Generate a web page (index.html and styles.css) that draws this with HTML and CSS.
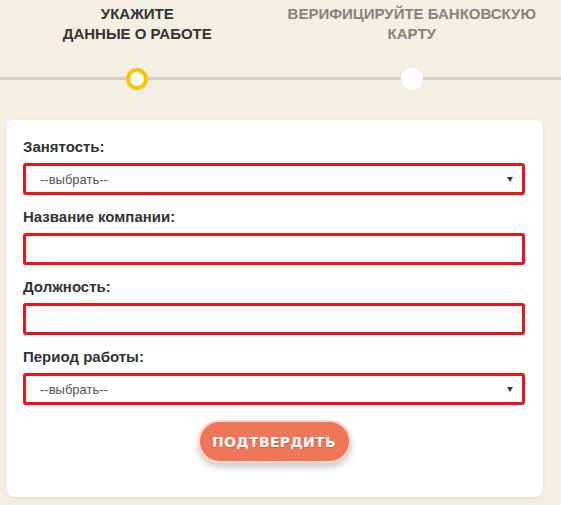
FILE: index.html
```html
<!DOCTYPE html>
<html lang="ru">
<head>
<meta charset="utf-8">
<title>Данные о работе</title>
<link rel="stylesheet" href="styles.css">
</head>
<body>
<div class="steps">
  <div class="step-labels">
    <div class="step-label active">УКАЖИТЕ<br>ДАННЫЕ О РАБОТЕ</div>
    <div class="step-label">ВЕРИФИЦИРУЙТЕ БАНКОВСКУЮ<br>КАРТУ</div>
  </div>
  <div class="track">
    <div class="dot-cell"><span class="dot dot-active"></span></div>
    <div class="dot-cell"><span class="dot"></span></div>
  </div>
</div>

<form class="card">
  <div class="field">
    <label class="label">Занятость:</label>
    <div class="select-box">
      <span class="select-text">--выбрать--</span>
      <svg class="arrow" width="6" height="5" viewBox="0 0 6 5"><path d="M0 0H6L3 5Z" fill="#3a3a3a"/></svg>
    </div>
  </div>
  <div class="field">
    <label class="label">Название компании:</label>
    <input class="input" type="text">
  </div>
  <div class="field">
    <label class="label">Должность:</label>
    <input class="input" type="text">
  </div>
  <div class="field">
    <label class="label">Период работы:</label>
    <div class="select-box">
      <span class="select-text">--выбрать--</span>
      <svg class="arrow" width="6" height="5" viewBox="0 0 6 5"><path d="M0 0H6L3 5Z" fill="#3a3a3a"/></svg>
    </div>
  </div>
  <div class="actions">
    <button class="btn" type="button">ПОДТВЕРДИТЬ</button>
  </div>
</form>
</body>
</html>
```

FILE: styles.css
```css
* { box-sizing: border-box; }

html, body {
  margin: 0;
  padding: 0;
}

body {
  background: #f3efe3;
  font-family: "Liberation Sans", Arial, sans-serif;
  color: #333;
  width: 561px;
  height: 505px;
  overflow: hidden;
}

.steps {
  padding-top: 4px;
}

.step-labels {
  display: grid;
  grid-template-columns: 1fr 1fr;
  padding-right: 12px;
}

.step-label {
  text-align: center;
  font-weight: bold;
  font-size: 15px;
  line-height: 20px;
  color: #858380;
}

.step-label.active {
  color: #333;
}

.track {
  display: grid;
  grid-template-columns: 1fr 1fr;
  padding-right: 12px;
  height: 22px;
  margin-top: 24px;
  background: linear-gradient(to bottom,
    transparent 9px, #d8d2c3 9px, #d8d2c3 12px, transparent 12px);
}

.dot-cell {
  display: flex;
  justify-content: center;
}

.dot {
  width: 22px;
  height: 22px;
  border-radius: 50%;
  background: #fff;
}

.dot-active {
  border: 4px solid #f6c500;
}

.card {
  display: block;
  margin: 30px 0 0 6px;
  width: 537px;
  height: 377px;
  background: #fff;
  border-radius: 8px;
  box-shadow: 0 1px 3px rgba(120, 110, 90, 0.18);
  padding: 17px 18px 0 17px;
}

.field {
  margin-bottom: 12px;
}

.label {
  display: block;
  font-weight: bold;
  font-size: 15px;
  line-height: 20px;
  color: #333;
  margin-bottom: 6px;
}

.input,
.select-box {
  display: flex;
  align-items: center;
  width: 502px;
  height: 32px;
  border: 3px solid #e8151b;
  border-radius: 3px;
  background: #fff;
  margin: 0;
  outline: none;
}

.select-box {
  padding: 0 9px 0 14px;
  justify-content: space-between;
}

.select-text {
  font-size: 13px;
  color: #555;
}

.arrow {
  display: block;
}

.actions {
  display: flex;
  justify-content: center;
  padding-top: 3px;
}

.btn {
  width: 153px;
  height: 43px;
  border-radius: 22px;
  border: 2px solid #f8d9cd;
  background: #f07659;
  color: #fff;
  font-family: "DejaVu Sans", sans-serif;
  font-weight: bold;
  font-size: 14px;
  letter-spacing: 0.3px;
  text-shadow: 0 1px 1px rgba(120, 40, 20, 0.35);
  box-shadow: 0 4px 7px rgba(0, 0, 0, 0.22);
  padding: 0;
  cursor: pointer;
}
```
